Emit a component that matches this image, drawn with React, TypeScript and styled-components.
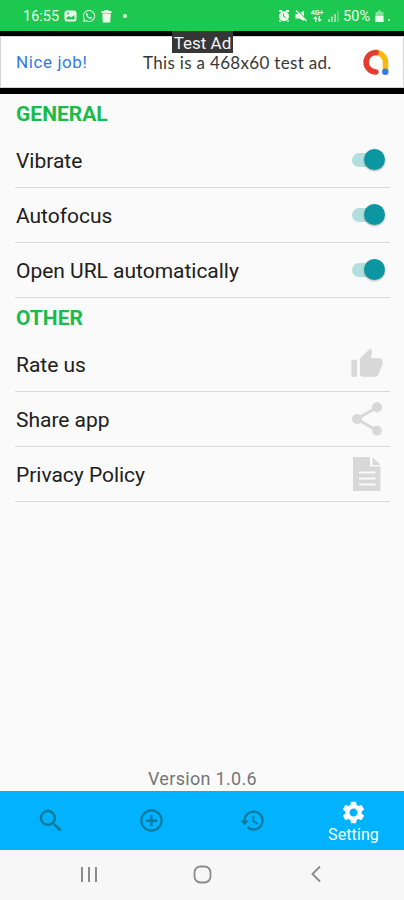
import React from "react";
import styled, { createGlobalStyle } from "styled-components";
import {
  MdAddCircleOutline,
  MdHistory,
  MdSearch,
  MdSettings,
  MdShare,
  MdThumbUp,
} from "react-icons/md";
import { FaWhatsapp } from "react-icons/fa";

const GlobalStyle = createGlobalStyle`
  * { box-sizing: border-box; }
  body { margin: 0; background: #fafafa; font-family: Roboto, "Liberation Sans", sans-serif; }
  svg { display: block; flex: none; }
`;

const Screen = styled.div`
  display: flex;
  flex-direction: column;
  width: 404px;
  height: 900px;
  overflow: hidden;
  background: #fafafa;
`;

const StatusBar = styled.header`
  display: flex;
  justify-content: space-between;
  align-items: center;
  height: 31px;
  flex: none;
  padding: 1px 14px 0 23px;
  background: #1cc850;
  color: #e9fbe9;
`;

const StatusGroup = styled.div<{ $gap: number }>`
  display: flex;
  align-items: center;
  gap: ${(p) => p.$gap}px;
`;

const StatusText = styled.span<{ $spacing: number }>`
  padding-top: 1px;
  font-size: 14.5px;
  line-height: 16px;
  letter-spacing: ${(p) => p.$spacing}px;
`;

const Dot = styled.span<{ $size: number; $left: number; $top: number }>`
  width: ${(p) => p.$size}px;
  height: ${(p) => p.$size}px;
  margin: ${(p) => p.$top}px 0 0 ${(p) => p.$left}px;
  border-radius: 50%;
  background: currentColor;
`;

const AdFrame = styled.section`
  position: relative;
  height: 63px;
  flex: none;
  padding: 5px 0 6px;
  background: #000;
`;

const AdBanner = styled.div`
  display: flex;
  align-items: center;
  height: 52px;
  padding: 0 14px 0 15px;
  border: 1px solid #d5d5d5;
  background: #fff;
`;

const AdHeadline = styled.span`
  width: 127px;
  font-size: 17px;
  letter-spacing: 0.6px;
  color: #3478e5;
`;

const AdText = styled.span`
  flex: 1;
  white-space: nowrap;
  font-family: Lato, Roboto, sans-serif;
  font-size: 17px;
  line-height: 17px;
  letter-spacing: 0.32px;
  color: #383838;
`;

const AdTag = styled.div`
  position: absolute;
  top: 0;
  left: 172px;
  width: 61px;
  height: 22px;
  background: #363636;
  color: #f4f4f4;
  font-size: 17px;
  line-height: 24px;
  text-align: center;
  white-space: nowrap;
`;

const Content = styled.main`
  flex: 1;
  display: flex;
  flex-direction: column;
  padding: 0 14px 0 15px;
`;

const SectionTitle = styled.h2`
  margin: 0;
  height: 39px;
  padding: 0 0 0 1px;
  font-size: 21px;
  font-weight: 700;
  line-height: 41px;
  color: #1abb4b;
`;

const Row = styled.div`
  display: flex;
  align-items: center;
  justify-content: space-between;
  height: 55px;
  padding: 1px 6px 0 1px;
  border-bottom: 1px solid #d9d9d9;
  color: #d8d8d8;
`;

const RowLabel = styled.span`
  font-size: 21px;
  letter-spacing: -0.02px;
  color: #202020;
`;

const IconSlot = styled.span`
  display: flex;
  justify-content: center;
  width: 32px;
  margin: 0 1px 2px 0;
`;

const Track = styled.span`
  display: flex;
  align-items: center;
  justify-content: flex-end;
  width: 32px;
  height: 14px;
  margin-bottom: 2px;
  border-radius: 8px;
  background: #b2dfdd;
`;

const Thumb = styled.span`
  width: 21px;
  height: 21px;
  margin-right: -1px;
  flex: none;
  border-radius: 50%;
  background: #0c96a1;
  box-shadow: 0 1px 2px rgba(0, 0, 0, 0.3);
`;

const Version = styled.footer`
  margin-top: auto;
  padding-bottom: 1px;
  font-size: 18px;
  line-height: 22px;
  letter-spacing: 0.32px;
  text-align: center;
  color: #757575;
`;

const TabBar = styled.nav`
  display: grid;
  grid-template-columns: repeat(4, 1fr);
  height: 59px;
  flex: none;
  background: #00b2ff;
`;

const Tab = styled.div<{ $active?: boolean }>`
  display: flex;
  flex-direction: column;
  align-items: center;
  justify-content: center;
  color: ${(p) => (p.$active ? "#fff" : "#087a99")};
`;

const TabLabel = styled.span`
  font-size: 16px;
  line-height: 17px;
  letter-spacing: 0.1px;
`;

const SystemNav = styled.div`
  display: flex;
  align-items: center;
  justify-content: space-between;
  height: 50px;
  flex: none;
  padding: 0 82px 2px 80px;
  background: #f7f7f7;
`;

const PictureIcon = () => (
  <svg width="13" height="12" viewBox="0 0 13 12">
    <rect x="0.5" y="0.5" width="12" height="11" rx="2.5" fill="currentColor" />
    <path d="M2.5 9.5V7.5L5 6l2 1.5L10.5 5v4.500z" fill="#1cc850" />
    <circle cx="4" cy="3.600" r="1" fill="#1cc850" />
  </svg>
);

const TrashIcon = () => (
  <svg width="11" height="13" viewBox="0 0 11 13" fill="currentColor">
    <path d="M0.500 1H3.500V0H7.500V1H10.500V3H0.500zM1.200 3.500H9.800L9.200 12.500H1.800z" />
  </svg>
);

const AlarmIcon = () => (
  <svg width="12" height="12" viewBox="0 0 12 12">
    <path d="M1 1h3M8 1h3M2.500 10.500L1.500 11.500M9.500 10.500L10.500 11.500" stroke="currentColor" strokeWidth="1.800" />
    <circle cx="6" cy="6.200" r="5" fill="currentColor" />
    <path d="M5.500 3.500v3l2.300 1.300" fill="none" stroke="#1cc850" strokeWidth="1" />
  </svg>
);

const MuteIcon = () => (
  <svg width="12" height="12" viewBox="0 0 12 12">
    <path d="M0.500 4h3.500l5-3.500v10.500L4 8.500H0.500z" fill="currentColor" />
    <path d="M2 0l10 10" stroke="#1cc850" strokeWidth="1" />
    <path d="M1 0.500l10.500 10.500" stroke="currentColor" strokeWidth="1.500" />
  </svg>
);

const NetworkMark = styled.span`
  display: flex;
  flex-direction: column;
  align-items: center;
  width: 12px;
  font-size: 7px;
  font-weight: 700;
  line-height: 6px;
`;

const TransferIcon = () => (
  <svg width="9" height="6" viewBox="0 0 9 6" fill="currentColor">
    <path d="M2 6V3H0L2.500 0 4.500 3H3.500V6zM5.500 0V3H4.500L6.500 6 9 3H7V0z" />
  </svg>
);

const SignalIcon = () => (
  <svg width="11" height="12" viewBox="0 0 11 12" stroke="currentColor" strokeWidth="1.400">
    <path d="M1 9v3M4 6.500V12M7 4v8" opacity=".8" />
    <path d="M10 1v11" opacity=".4" />
  </svg>
);

const BatteryIcon = () => (
  <svg width="9" height="12" viewBox="0 0 9 12">
    <path d="M3 0.500h3v1.500h2.500v10h-8V2H3z" fill="currentColor" opacity=".5" />
    <path d="M0.500 6h8v6h-8z" fill="currentColor" />
  </svg>
);

const AdLogo = () => (
  <svg width="27" height="27" viewBox="0 0 27 27" fill="none" strokeWidth="5.600" strokeLinecap="round">
    <path d="M14 3.500A10 10 0 0 1 23.500 13.500V22" stroke="#fbb90d" />
    <path d="M14 3.500A9.500 9.500 0 1 0 13.800 23" stroke="#e33d32" />
    <circle cx="23.300" cy="22.800" r="3.200" fill="#347be4" />
  </svg>
);

const DocumentIcon = () => (
  <svg width="30" height="36" viewBox="0 0 30 36">
    <path d="M1 1h17v9.500h10.500V35H1z" fill="currentColor" />
    <path d="M20.500 1L28.500 9h-8z" fill="currentColor" />
    <path d="M7 16.500h16.500M7 22.500h16.500M7 28.500h16.500" stroke="#fafafa" strokeWidth="2" />
  </svg>
);

const RecentsIcon = () => (
  <svg width="18" height="17" viewBox="0 0 18 17" stroke="#8b8b8b" strokeWidth="2">
    <path d="M2 1v15M9 1v15M16 1v15" />
  </svg>
);

const HomeIcon = () => (
  <svg width="23" height="19" viewBox="0 0 23 19">
    <rect x="1.500" y="1.500" width="16" height="16" rx="6" fill="none" stroke="#8b8b8b" strokeWidth="1.800" />
  </svg>
);

const BackIcon = () => (
  <svg width="12" height="18" viewBox="0 0 12 18">
    <path d="M10 1.500L2.500 9l7.500 7.500" fill="none" stroke="#8b8b8b" strokeWidth="1.900" />
  </svg>
);

const toggles = ["Vibrate", "Autofocus", "Open URL automatically"];

const links = [
  { label: "Rate us", icon: <MdThumbUp size={34} /> },
  { label: "Share app", icon: <MdShare size={40} /> },
  { label: "Privacy Policy", icon: <DocumentIcon /> },
];

export default function App() {
  return (
    <>
      <GlobalStyle />
      <Screen>
        <StatusBar>
          <StatusGroup $gap={5}>
            <StatusText $spacing={0}>16:55</StatusText>
            <PictureIcon />
            <FaWhatsapp size={14} />
            <TrashIcon />
            <Dot $size={4} $left={6} $top={0} />
          </StatusGroup>
          <StatusGroup $gap={4.5}>
            <AlarmIcon />
            <MuteIcon />
            <NetworkMark>
              4G+
              <TransferIcon />
            </NetworkMark>
            <SignalIcon />
            <StatusText $spacing={0}>50%</StatusText>
            <BatteryIcon />
            <Dot $size={2} $left={0} $top={8} />
          </StatusGroup>
        </StatusBar>
        <AdFrame>
          <AdBanner>
            <AdHeadline>Nice job!</AdHeadline>
            <AdText>This is a 468x60 test ad.</AdText>
            <AdLogo />
          </AdBanner>
          <AdTag>Test Ad</AdTag>
        </AdFrame>
        <Content>
          <SectionTitle>GENERAL</SectionTitle>
          {toggles.map((label) => (
            <Row key={label}>
              <RowLabel>{label}</RowLabel>
              <Track>
                <Thumb />
              </Track>
            </Row>
          ))}
          <SectionTitle>OTHER</SectionTitle>
          {links.map(({ label, icon }) => (
            <Row key={label}>
              <RowLabel>{label}</RowLabel>
              <IconSlot>{icon}</IconSlot>
            </Row>
          ))}
          <Version>Version 1.0.6</Version>
        </Content>
        <TabBar>
          <Tab><MdSearch size={30} /></Tab>
          <Tab><MdAddCircleOutline size={27} /></Tab>
          <Tab><MdHistory size={27} /></Tab>
          <Tab $active>
            <MdSettings size={27} />
            <TabLabel>Setting</TabLabel>
          </Tab>
        </TabBar>
        <SystemNav>
          <RecentsIcon />
          <HomeIcon />
          <BackIcon />
        </SystemNav>
      </Screen>
    </>
  );
}
